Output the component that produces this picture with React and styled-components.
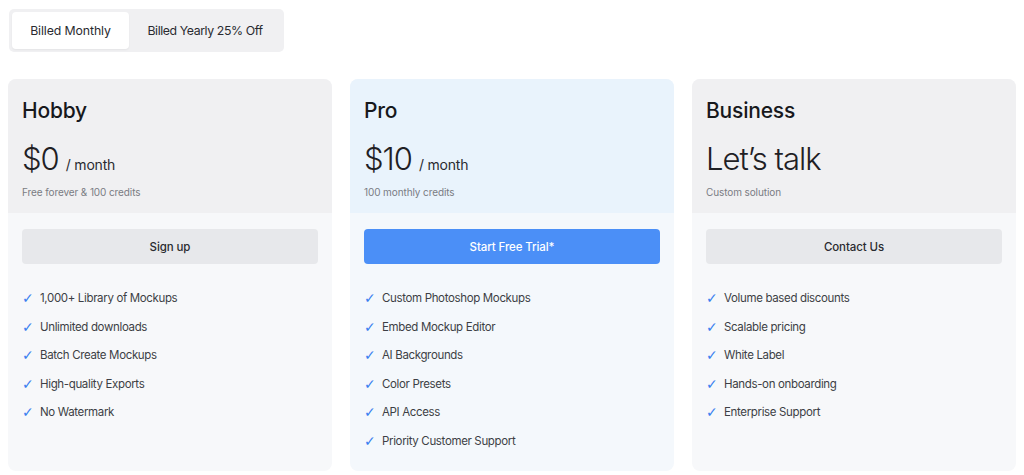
import React from 'react';
import styled, {createGlobalStyle} from "styled-components";

const GlobalStyle = createGlobalStyle`
  body {
    margin: 0;
    background: #ffffff;
    font-family: "Inter", "Noto Sans", sans-serif;
    color: #1f2024;
  }
`

const plans = [
    {
        name: "Hobby",
        price: "$0",
        per: "/ month",
        note: "Free forever & 100 credits",
        cta: "Sign up",
        features: ["1,000+ Library of Mockups", "Unlimited downloads", "Batch Create Mockups", "High-quality Exports", "No Watermark"],
    },
    {
        name: "Pro",
        price: "$10",
        per: "/ month",
        note: "100 monthly credits",
        cta: "Start Free Trial*",
        featured: true,
        features: ["Custom Photoshop Mockups", "Embed Mockup Editor", "AI Backgrounds", "Color Presets", "API Access", "Priority Customer Support"],
    },
    {
        name: "Business",
        price: "Let’s talk",
        note: "Custom solution",
        cta: "Contact Us",
        features: ["Volume based discounts", "Scalable pricing", "White Label", "Hands-on onboarding", "Enterprise Support"],
    },
]

const App = () => {
    return (<Page>
        <GlobalStyle/>
        <Toggle>
            <ToggleOption $active>Billed Monthly</ToggleOption>
            <ToggleOption>Billed Yearly 25% Off</ToggleOption>
        </Toggle>
        <Cards>
            {plans.map((plan) => {
                return <Card key={plan.name} $featured={plan.featured}>
                    <CardHead $featured={plan.featured}>
                        <PlanName>{plan.name}</PlanName>
                        <PriceRow>
                            <Price>{plan.price}</Price>
                            {plan.per ? <Per>{plan.per}</Per> : null}
                        </PriceRow>
                        <Note>{plan.note}</Note>
                    </CardHead>
                    <CardBody>
                        <Button $primary={plan.featured}>{plan.cta}</Button>
                        <Features>
                            {plan.features.map((item) => {
                                return <Feature key={item}>
                                    <Check>✓</Check>
                                    <span>{item}</span>
                                </Feature>
                            })}
                        </Features>
                    </CardBody>
                </Card>
            })}
        </Cards>
    </Page>);
};

const Page = styled.div`
  padding: 9px 8px 0;
  width: 1024px;
  box-sizing: border-box;
`

const Toggle = styled.div`
  display: inline-flex;
  align-items: center;
  background: #f0f0f2;
  border-radius: 5px;
  padding: 3px;
  height: 43px;
  box-sizing: border-box;
  width: 275px;
  margin-left: 1px;
`

const ToggleOption = styled.div`
  height: 37px;
  display: flex;
  align-items: center;
  justify-content: center;
  flex: ${props => props.$active ? "0 0 117px" : "1"};
  border-radius: 4px;
  font-size: 12.3px;
  letter-spacing: ${props => props.$active ? "-0.1px" : "-0.4px"};
  color: #2a2b30;
  background: ${props => props.$active ? "#ffffff" : "transparent"};
  box-shadow: ${props => props.$active ? "0 1px 2px rgba(0,0,0,0.05)" : "none"};
  white-space: nowrap;
`

const Cards = styled.div`
  display: grid;
  grid-template-columns: repeat(3, 324px);
  gap: 18px;
  margin-top: 27px;
`

const Card = styled.div`
  border-radius: 8px;
  overflow: hidden;
  height: 392px;
  background: ${props => props.$featured ? "#f4f8fc" : "#f7f8fa"};
  display: flex;
  flex-direction: column;
`

const CardHead = styled.div`
  background: ${props => props.$featured ? "#e9f3fc" : "#f0f0f2"};
  height: 134px;
  box-sizing: border-box;
  padding: 19px 14px 0;
`

const PlanName = styled.div`
  font-size: 21px;
  font-weight: 500;
  color: #17181c;
  line-height: 26px;
  letter-spacing: -0.2px;
`

const PriceRow = styled.div`
  display: flex;
  align-items: baseline;
  gap: 7px;
  margin-top: 16px;
`

const Price = styled.div`
  font-size: 31px;
  font-weight: 300;
  color: #1f2024;
  line-height: 38px;
  letter-spacing: -1px;
`

const Per = styled.div`
  font-size: 14px;
  color: #2a2b30;
  letter-spacing: -0.2px;
`

const Note = styled.div`
  margin-top: 8px;
  font-size: 10px;
  color: #7a7c83;
  letter-spacing: -0.1px;
`

const CardBody = styled.div`
  padding: 16px 14px 0;
`

const Button = styled.div`
  height: 35px;
  display: flex;
  align-items: center;
  justify-content: center;
  border-radius: 4px;
  font-size: 11.5px;
  font-weight: 500;
  letter-spacing: -0.1px;
  background: ${props => props.$primary ? "#4b8ff7" : "#e7e8eb"};
  color: ${props => props.$primary ? "#ffffff" : "#2a2b30"};
`

const Features = styled.ul`
  list-style: none;
  margin: 26px 0 0;
  padding: 0;
  display: flex;
  flex-direction: column;
  gap: 11px;
`

const Feature = styled.li`
  display: flex;
  align-items: center;
  gap: 10px;
  font-size: 11.5px;
  color: #3d3f45;
  line-height: 17.6px;
  letter-spacing: -0.35px;
`

const Check = styled.span`
  color: #3b7ff0;
  font-family: "DejaVu Sans", sans-serif;
  font-size: 14px;
  font-weight: 700;
  width: 8px;
`

export default App;
